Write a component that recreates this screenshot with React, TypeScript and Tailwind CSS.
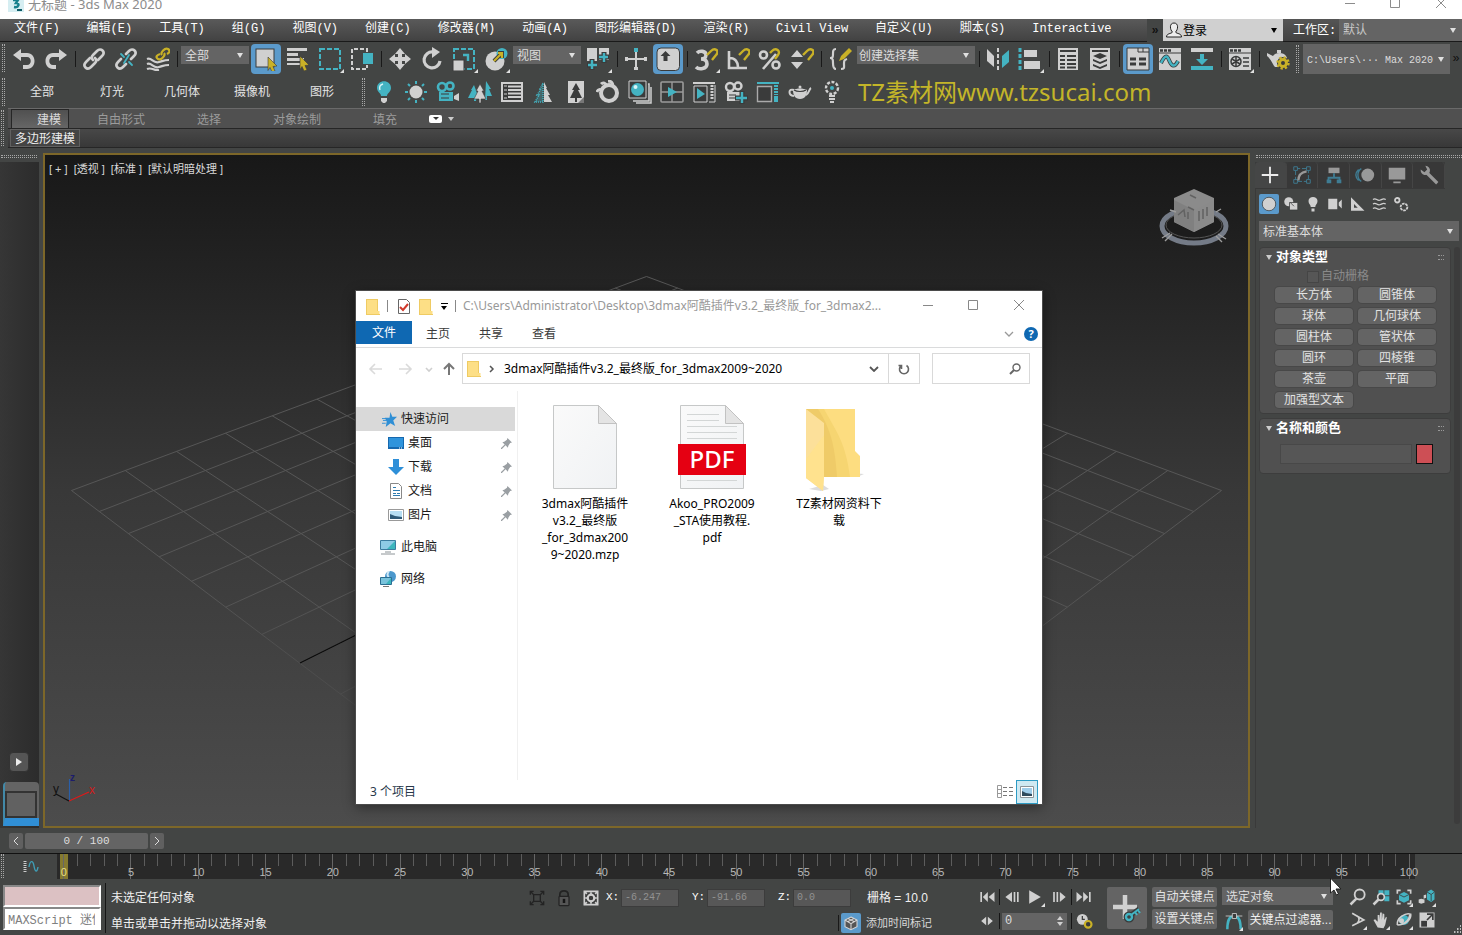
import React from 'react';

const G = '#d0d0d0';
const T = '#44b3c2';
const Y = '#c9b127';
const D = '#3a3b3b';

const MONO = "font-['Liberation_Mono','Noto_Sans_CJK_SC',monospace]";
const SANS = "font-['Noto_Sans','Noto_Sans_CJK_SC',sans-serif]";
const NUM = "font-['Liberation_Sans','Noto_Sans_CJK_SC',sans-serif]";

const magnet = <path d="M13 8l4-4c4-4 9 0 5 4l-4 5" fill="none" stroke={Y} strokeWidth="2.4" />;

// Drawings for the toolbars, all on a 24px canvas
const icons: Record<string, React.ReactNode> = {
  undo: <path d="M1 8l8-6v4h6c10 0 10 16 0 16h-4v-4h4c5 0 5-8 0-8H9v4z" fill={G} />,
  redo: <path d="M23 8l-8-6v4H9C-1 6-1 22 9 22h3v-4H9c-5 0-5-8 0-8h6v4z" fill={G} />,
  link: (
    <g fill="none" stroke={G} strokeWidth="2.6" strokeLinecap="round">
      <path d="M11 13c-2-2-1-4 0-5l4-4c4-4 9 1 5 5l-4 4" /><path d="M13 11c2 2 1 4 0 5l-4 4c-4 4-9-1-5-5l4-4" />
    </g>
  ),
  unlink: (
    <g fill="none" strokeWidth="2.6" strokeLinecap="round">
      <path d="M12 7l3-3c4-4 9 1 5 5l-3 3M12 17l-3 3c-4 4-9-1-5-5l3-3" stroke={G} />
      <path d="M7 7l3 3M18 18l-3-3" stroke={T} strokeWidth="1.8" /><path d="M15 8l-5 8" stroke={T} strokeWidth="1.8" />
    </g>
  ),
  bind: (
    <g fill="none" stroke={G} strokeWidth="2.2">
      <path d="M1 12c5-2 6 5 12 3 4-1 5-2 10-2M1 17c5-2 6 5 12 3 4-1 5-2 10-2M1 22c5-2 7 2 12 1" />
      <g stroke={Y}><path d="M16 8c-2-2 3-8 6-6s1 4-1 5" /><path d="M18 6c2 2-3 8-6 6s-1-4 2-5" /></g>
    </g>
  ),
  select: <><rect x="2" y="2" width="18" height="18" fill={G} stroke={D} /><path d="M14 10l9 9-4 .5 2 4.500-3 1-2-4.500-2 3z" fill={Y} stroke={D} strokeWidth=".6" /></>,
  byname: <><path d="M1 1h20v3H1zM1 6h11v3H1zM1 11h17v3H1zM1 16h13v2H1z" fill={G} /><path d="M14 9l9 9-4 .5 2 4.500-3 1-2-4.500-2 3z" fill={Y} stroke={D} strokeWidth=".6" /></>,
  region: <rect x="2" y="2" width="20" height="20" fill="none" stroke={T} strokeWidth="2" strokeDasharray="5 2" />,
  crossing: <><path d="M17 5V2H2v20h15v-4" fill="none" stroke={G} strokeWidth="2" strokeDasharray="4 2" /><rect x="13" y="6" width="10" height="11" fill={T} /></>,
  move: <path d="M12 1l5 6h-3v3h3V7l6 5-6 5v-3h-3v3h3l-5 6-5-6h3v-3H7v3l-6-5 6-5v3h3V7H7z" fill={G} />,
  rotate: <><path d="M20 14a8 8 0 1 1-7-9" fill="none" stroke={G} strokeWidth="3.2" /><path d="M12 0l8 5-8 6z" fill={G} /></>,
  scale: <><rect x="2" y="2" width="20" height="20" fill="none" stroke={T} strokeWidth="2" strokeDasharray="5 2" /><rect x="1" y="13" width="11" height="11" fill={G} stroke={D} /><path d="M11 8h5v6" fill="none" stroke={T} strokeWidth="2.4" /></>,
  place: <><circle cx="11" cy="14" r="9.5" fill={G} /><circle cx="18" cy="6.5" r="5.5" fill={T} /><path d="M10 14l8-8M14 6h4v5" fill="none" stroke={D} strokeWidth="4" /><path d="M10 14l8-8M14 6h4v5" fill="none" stroke={Y} strokeWidth="2.2" /></>,
  center: <><path d="M1 1h10v13H1zM13 1h10v12H13z" fill={G} /><path d="M6 12v11M1 18h10M18 5v11M13 10h10" stroke={D} strokeWidth="5" /><path d="M6 13v9M2 18h9M18 6v9M13 10h9" stroke={T} strokeWidth="2.4" /></>,
  manip: <><path d="M12 5v16M3 12h18" stroke={G} strokeWidth="2" /><path d="M1 10h3v4H1zM20 10h3v4h-3zM10 20h4v3h-4z" fill={G} /><rect x="10" y="1" width="4" height="4" fill={T} /></>,
  keyboard: <><rect x="1" y="1" width="22.500" height="22.500" rx="4" fill={G} stroke={D} /><path d="M9.500 4l5 5h-3v5h-4V9h-3z" fill={D} /></>,
  snap: <><path d="M3 6c3-3 9-2 9 2 0 3-3 4-5 4 3 0 6 1 6 5 0 5-8 6-11 3" fill="none" stroke={G} strokeWidth="3.6" />{magnet}</>,
  angle: <><path d="M3 4v17h18M4 11c5 0 8 4 8 9" fill="none" stroke={G} strokeWidth="2.6" />{magnet}</>,
  percent: <><g fill="none" stroke={G} strokeWidth="2.6"><circle cx="5.5" cy="8" r="3.5" /><circle cx="18" cy="18" r="3.5" /><path d="M18 7L5 22" /></g><path d="M12 6l2-2c4-4 9 0 6 4l-3 4" fill="none" stroke={Y} strokeWidth="2.4" /></>,
  spinner: <><path d="M7 3l6 7H1zM7 22l6-7H1z" fill={G} />{magnet}</>,
  braces: <><path d="M8 2C5 2 5 4 5 7c0 3 0 4-3 4 3 0 3 2 3 5 0 3 0 6 3 6M13 22c4 0 3-2 3-5 0-3 0-4 3-5" fill="none" stroke={G} strokeWidth="2.2" /><path d="M11 14l2-5 8-8 3 3-8 8z" fill={Y} /></>,
  mirror: <><path d="M1 2l7 7v11l-7-6z" fill={G} /><path d="M12 1v22" stroke={G} strokeWidth="2" strokeDasharray="4 2" /><path d="M23 3v12l-7 6V9z" fill={T} /></>,
  align: <><path d="M2 1v22" stroke={T} strokeWidth="3" strokeDasharray="4 2" /><path d="M6 3h13v7H6zM6 14h16v8H6z" fill={G} /></>,
  layers: <><rect x="2" y="1" width="20" height="22" fill={G} /><path d="M4 4h16M4 9h5M11 9h9M4 13h5M11 13h9M4 17h5M11 17h9M4 20.500h5M11 20.500h9" stroke={D} strokeWidth="2" /></>,
  layers2: <><rect x="2" y="1" width="20" height="22" fill={G} /><path d="M4 4h16" stroke={D} strokeWidth="2" /><path d="M12 6l7 3-7 3-7-3zM5 12l7 3 7-3v2l-7 3-7-3zM5 17l7 3 7-3v2l-7 3-7-3z" fill={D} /></>,
  ribbon: <><path d="M1 1h22v22H1z" fill={G} stroke={D} /><path d="M12 1v4h11M17 1v4" stroke={D} fill="none" /><path d="M4 12h6M4 17h6M13 12h7M13 17h7" stroke={D} strokeWidth="3" /></>,
  curve: <><path d="M1 1h22v22H1z" fill={G} /><path d="M2 3.500h12" stroke={D} strokeWidth="2.500" strokeDasharray="3 1" /><path d="M1 6h22" stroke={D} /><path d="M3 16c4-8 6-8 8-3s5 9 9 1" fill="none" stroke={D} strokeWidth="4" /><path d="M3 16c4-8 6-8 8-3s5 9 9 1" fill="none" stroke={T} strokeWidth="2.4" /></>,
  schematic: <><path d="M1 1h22v4H1z" fill={G} /><path d="M1 19h22v4H1z" fill={T} /><path d="M10 7h4v5h4l-6 6-6-6h4z" fill={T} /></>,
  material: <><path d="M1 1h22v22H1z" fill={G} /><path d="M2 3.500h12" stroke={D} strokeWidth="2.500" strokeDasharray="3 1" /><path d="M1 6h22" stroke={D} /><circle cx="8" cy="14.5" r="5" fill="none" stroke={D} strokeWidth="1.5" /><path d="M8 10v9M4 12l8 5M4 17l8-5M15 11h6M15 15h6M15 19h6" stroke={D} strokeWidth="1.5" /></>,
  render: <><path d="M1 6l6 3c2-4 11-4 13 0 3 4 0 10-4 11H9C7 18 5 12 1 9zM11 3h4v3h-4z" fill={G} /><circle cx="17" cy="16" r="6" fill={D} /><circle cx="17" cy="16" r="3.5" fill="none" stroke={Y} strokeWidth="3" /><circle cx="17" cy="16" r="5.5" fill="none" stroke={Y} strokeWidth="2.400" strokeDasharray="2.300 2" /></>,
  bulb: <><path d="M9 16c0-3-4-4-4-8 0-9 14-9 14 0 0 4-4 5-4 8z" fill={T} /><path d="M9 18h6v3l-2 2h-2l-2-2z" fill={G} /><path d="M11 4c-3 1-4 3-3 6" stroke="#d8f5f7" fill="none" strokeWidth="1.4" /></>,
  sun: <><circle cx="12" cy="12" r="6.5" fill={G} /><path d="M12 1v3M12 20v3M1 12h3M20 12h3M4 4l2 2M18 18l2 2M20 4l-2 2M4 20l2-2" stroke={T} strokeWidth="2" /></>,
  camera: <><circle cx="6" cy="7" r="4" fill="none" stroke={T} strokeWidth="2.6" /><circle cx="14" cy="6" r="3.5" fill="none" stroke={T} strokeWidth="2.6" /><path d="M3 12h14v9H3z" fill={T} /><path d="M5 14h8M5 18h8" stroke={D} /><path d="M18 16l5-3v8l-5-2z" fill={G} /></>,
  trees: <><path d="M18 1l5 8h-2l3 7h-5v4h-2z" fill={T} /><path d="M6 5L3 10h1L0 18h6v3h2l1-8z" fill={T} /><path d="M12 4l4 7h-2l4 8h-5v4h-2v-4H6l4-8H8z" fill={G} stroke={D} strokeWidth=".6" /></>,
  sheet: <><rect x="2" y="3" width="20" height="18" fill={D} stroke={G} strokeWidth="2" /><path d="M4 6h3M4 10h3M4 14h3M4 18h3" stroke={G} /><path d="M8 6.500h13M8 10h13M8 13.500h13M8 17h13" stroke={G} strokeWidth="2" /></>,
  forest: <><path d="M11 3L8 9h1l-4 6h2l-4 7h8z" fill={T} fillOpacity=".3" stroke={T} strokeWidth="1.500" strokeDasharray="1 1" /><path d="M12 2l3 6h-1l4 7h-2l4 7h-8z" fill={G} /></>,
  treecard: <><path d="M4 1h16v22H4z" fill={G} /><path d="M20 17v6h-6z" fill="#777" /><path d="M12 3l4 7h-2l4 8h-5v4h-2v-4H6l4-8H8z" fill={D} /></>,
  ring: <><circle cx="13" cy="13" r="8" fill="none" stroke={G} strokeWidth="4" /><path d="M1 12c1-3 3-3 5-1M5 4c2-2 5-1 6 2M12 1c3 0 5 2 5 5" stroke={G} strokeWidth="3" fill="none" /></>,
  ball: <><path d="M1 1h17v17H1z" fill={D} stroke={G} /><path d="M20 4h1v17H5M23 7v16H8" stroke={G} fill="none" strokeWidth="1.5" /><circle cx="9.5" cy="9.5" r="6.5" fill={T} /><circle cx="7.5" cy="7" r="2" fill="#d8f5f7" /></>,
  quad: <><rect x="1" y="2" width="22" height="20" rx="1" fill={D} stroke="#9b9b9b" strokeWidth="1.600" /><path d="M12 2v20M1 12h22" stroke="#9b9b9b" strokeWidth="1.4" /><path d="M8 7l9 5-9 5z" fill={T} /></>,
  play: <><path d="M1 3h22" stroke={G} strokeWidth="2" /><path d="M2 6h13v16H2z" fill={D} stroke={G} /><path d="M5 8l8 6-8 5z" fill={T} /><path d="M20 5v15" stroke={G} strokeWidth="3" strokeDasharray="2 1" /><path d="M17 22h6V5" fill="none" stroke={G} /></>,
  camadd: <><circle cx="6" cy="7" r="4" fill="none" stroke={G} strokeWidth="2.4" /><circle cx="14" cy="6" r="3.5" fill="none" stroke={G} strokeWidth="2.4" /><path d="M3 12h15v9H3z" fill={G} /><path d="M5 15h7M5 18h7" stroke={D} /><path d="M18 11v13M11 18h13" stroke={D} strokeWidth="5" /><path d="M18 12v11M12 18h11" stroke={T} strokeWidth="2.4" /></>,
  frame: <><path d="M1 3h22" stroke={T} strokeWidth="2" /><path d="M1.500 6.500h14v15h-14z" fill={D} stroke="#aaa" strokeWidth="1.4" /><path d="M20 5v10" stroke={T} strokeWidth="4" strokeDasharray="2 1" /><path d="M20 16v6" stroke={T} strokeWidth="4" /></>,
  teapot: <><path d="M5 10c0 5 2 9 7 9s7-4 7-9c-4-2-10-2-14 0z" fill={G} /><path d="M6 10C0 8 0 15 6 16M18 15c3-1 3-6 5-7" fill="none" stroke={G} strokeWidth="2" /><path d="M6 10c3 2 9 2 12 0" fill="none" stroke={D} strokeWidth="1.200" /><circle cx="12" cy="7" r="1.500" fill={G} /></>,
  spot: <><circle cx="12" cy="8" r="6" fill="none" stroke={G} strokeWidth="2.4" strokeDasharray="3 1.500" /><circle cx="12" cy="8" r="2" fill={T} /><path d="M9 15h6v2H9zM9 18h6v2H9zM10 21h4v2h-4z" fill={G} /></>,
  isolate: <g fill="none" stroke="#232323" strokeWidth="1.6"><path d="M4 8V4h4M16 4h4v4M20 16v4h-4M8 20H4v-4M8 8h8v8H8zM4 4l4 4M20 4l-4 4M4 20l4-4M20 20l-4-4" /></g>,
  lock: <><path d="M7 11V8c0-6 10-6 10 0v3" fill="none" stroke="#232323" strokeWidth="2" /><rect x="6" y="10" width="12" height="11" rx="1" fill="#555" stroke="#232323" strokeWidth="1.5" /><path d="M12 13v5" stroke="#161616" strokeWidth="3" /></>,
  absolute: <><path d="M4 4h16v16H4z" fill={D} stroke={G} strokeWidth="2" /><path d="M4 4l3 3M20 4l-3 3M4 20l3-3M20 20l-3-3" stroke={G} strokeWidth="2" /><circle cx="12" cy="12" r="4" fill={D} stroke={G} strokeWidth="2.600" /><path d="M12 5v4M12 15v4M5 12h4M15 12h4" stroke={G} strokeWidth="2" /></>,
  tag: <g fill="#555" stroke="#d6d6d6" strokeWidth="1.4"><path d="M12 4l8 4v9l-8 4-8-4V8z" /><path d="M4 8l8 5 8-5M12 13v8M8 6l8 4M16 6l-8 4" fill="none" /></g>,
  first: <path d="M4 6h2v12H4zM13 6v12l-6-6zM21 6v12l-7-6z" fill={G} />,
  prev: <path d="M12 6v12l-8-6zM14 6h2v12h-2zM18 6h2v12h-2z" fill={G} />,
  start: <path d="M5 4l14 8-14 8z" fill={G} />,
  next: <path d="M5 6h2v12H5zM9 6h2v12H9zM13 6l7 6-7 6z" fill={G} />,
  last: <path d="M18 6h2v12h-2zM3 6l7 6-7 6zM11 6l6 6-6 6z" fill={G} />,
  step: <path d="M11 7v10l-6-5zM13 7l6 5-6 5z" fill={G} />,
  clock: <><circle cx="10" cy="10" r="6.5" fill={G} /><path d="M10 6v4h3" stroke={D} strokeWidth="1.5" fill="none" /><circle cx="17" cy="16" r="4" fill={D} stroke={Y} strokeWidth="2.6" /></>,
  zoom: <><circle cx="14" cy="9" r="6" fill="none" stroke={G} strokeWidth="2.2" /><path d="M10 14l-7 7" stroke={G} strokeWidth="3" /></>,
  zoomall: <><path d="M9 4h6v6H9zM16 4h6v6h-6zM16 11h6v6h-6z" fill={T} /><circle cx="12" cy="12" r="4" fill={D} stroke={G} strokeWidth="2" /><path d="M9 15l-6 6" stroke={G} strokeWidth="3" /></>,
  extents: <><path d="M4 8V4h4M16 4h4v4M20 16v4h-4M8 20H4v-4" fill="none" stroke={G} strokeWidth="2" /><path d="M12 6l6 3v7l-6 3-6-3V9z" fill={T} /><path d="M6 9l6 3 6-3" fill="none" stroke={D} /></>,
  extall: <><path d="M12 6l5-3 4 3v9l-4 3-5-3z" fill={T} /><path d="M12 6l5 3 4-3M17 9v8" stroke={D} fill="none" /><path d="M2 15l3-1 4 1v4l-4 1-3-1zM8 10l3-1v4l-3 1z" fill={G} /></>,
  fov: <path d="M5 4l14 8-14 7M11 7c3 2 3 6 0 9" fill="none" stroke={G} strokeWidth="2" />,
  pan: <path d="M8 21l-5-9 2-1 3 3V6h2v6l1-9h2v9l1-8 2 1v7l2-4 1 1-2 9-2 4z" fill={G} />,
  orbit: <><circle cx="12" cy="12" r="6" fill={T} /><path d="M4 18C3 9 14 3 20 5c1 6-6 13-16 13M9 17c5-1 9-5 10-11" fill="none" stroke={G} strokeWidth="2" /><circle cx="9" cy="13" r="3" fill={G} /></>,
  maximize: <><path d="M3 3h18v18H3z" fill={G} /><path d="M12 5h7v7M18 6l-6 6" stroke={D} strokeWidth="2" fill="none" /><path d="M5 13h7v7H5z" fill={D} /></>,
  keycurve: <><path d="M4 22c0-8 2-15 6-15M20 22c0-8-2-15-6-15" fill="none" stroke={T} strokeWidth="3" /><path d="M2 6h20" stroke={G} /><path d="M10 3h5v6h-5z" fill={D} stroke={G} /></>,
};

const Icon = ({ name, className = 'size-6' }: { name: string; className?: string }) => (
  <svg viewBox="0 0 24 24" className={`${className} shrink-0`} aria-hidden="true">{icons[name]}</svg>
);

const Corner = () => <span className="absolute right-0.5 bottom-px size-0 border-2 border-t-transparent border-l-transparent border-r-[#e0e0e0] border-b-[#e0e0e0]" />;

const ToolButton = ({ name, active = false, corner = false }: { name: string; active?: boolean; corner?: boolean }) => (
  <button aria-label={name} className="relative flex w-8 h-[30px] shrink-0 items-center justify-center">
    <span className={`flex size-[30px] items-center justify-center rounded ${active ? 'bg-[#5b9acb]' : ''}`}>
      <Icon name={name} />
    </span>
    {corner && <Corner />}
  </button>
);

const Sep = () => <span className="w-[6px] shrink-0 flex justify-center"><span className="w-px h-4 bg-[#191919]" /></span>;

const Grip = ({ className = '' }: { className?: string }) => (
  <span className={`w-[3px] shrink-0 border-x border-dotted border-[#a8a8a8] ${className}`} />
);

interface SelectProps { label: string; options: string[]; className?: string; text?: string; arrow?: string }

const Select = ({ label, options, className = '', text = 'pl-1 text-[#dcdcdc]', arrow = 'border-t-[#e0e0e0]' }: SelectProps) => (
  <span className={`relative flex items-center ${className}`}>
    <select aria-label={label} className={`appearance-none outline-none bg-transparent w-full h-full pt-[3px] pr-4 ${text}`}>
      {options.map(o => <option key={o}>{o}</option>)}
    </select>
    <span className={`absolute right-[6px] border-x-[3px] border-t-[5px] border-x-transparent pointer-events-none ${arrow}`} />
  </span>
);

const MENUS = ['文件(F)', '编辑(E)', '工具(T)', '组(G)', '视图(V)', '创建(C)', '修改器(M)', '动画(A)', '图形编辑器(D)', '渲染(R)', 'Civil View', '自定义(U)', '脚本(S)', 'Interactive'];

const TitleBar = () => (
  <header className={`flex h-[19px] shrink-0 items-start justify-between overflow-hidden bg-white text-[#8c8c8c] ${SANS}`}>
    <div className="flex items-center gap-1 pl-2 -mt-1.5">
      <svg viewBox="0 0 16 16" className="size-4">
        <rect width="16" height="16" fill="#d6eef2" />
        <path d="M5 4h5l-2 3c4 0 3 5-2 4" fill="none" stroke="#15808c" strokeWidth="2.4" />
        <path d="M9 14h5" stroke="#0d5a66" strokeWidth="2" />
      </svg>
      <span className="text-[13px] leading-5">无标题 - 3ds Max 2020</span>
    </div>
    <svg viewBox="0 0 120 19" className="w-[120px] h-[19px] fill-none stroke-[#8c8c8c]">
      <path d="M3 3.500h10M48.500-2v9.500h9V-2M94-2l10 10M104-2L94 8" />
    </svg>
  </header>
);

const MenuBar = () => (
  <div className={`flex h-[23px] shrink-0 text-xs text-white ${MONO}`}>
    <nav className="flex flex-1 min-w-0 items-center gap-[27px] overflow-hidden whitespace-nowrap border-b border-[#1a1a1a] bg-linear-to-b from-[#5a5a5a] to-[#424242] pl-3.5 pb-0.5">
      {MENUS.map(m => <button key={m} className="shrink-0">{m}</button>)}
    </nav>
    <button className="w-4 text-[#111] font-bold">»</button>
    <div className="flex w-30 h-[22px] items-center bg-[#d0d0d0] pl-0.5">
      <svg viewBox="0 0 18 18" className="size-[18px] shrink-0">
        <path d="M9 2c5 0 4 7 1.500 9 1 2 6 1 6 5h-15c0-4 5-3 6-5C5 9 4 2 9 2z" fill="#eee" stroke="#222" />
      </svg>
      <Select label="登录" options={['登录']} className="flex-1 h-full" text="text-black" arrow="border-t-black" />
    </div>
    <label htmlFor="workspace" className="flex w-14 items-center border-b border-[#1a1a1a] bg-linear-to-b from-[#555] to-[#424242] pt-0.5 pl-2.5 whitespace-nowrap">工作区:</label>
    <span className="relative flex w-[123px] items-center border-b border-[#1a1a1a] bg-[#646464]">
      <select id="workspace" className="appearance-none bg-transparent w-full h-full pt-0.5 pl-1 text-[#c8c8c8]"><option>默认</option></select>
      <span className="absolute right-[6px] border-x-[3px] border-t-[5px] border-x-transparent border-t-[#e0e0e0] pointer-events-none" />
    </span>
  </div>
);

const MainToolbar = () => (
  <div className={`flex h-[34px] shrink-0 items-start pt-[2px] pl-[2px] text-xs ${MONO}`}>
    <Grip className="h-7 mr-[3px]" />
    <div className="flex flex-1 min-w-0 h-[30px] items-center">
      <ToolButton name="undo" /><ToolButton name="redo" /><Sep />
      <ToolButton name="link" /><ToolButton name="unlink" /><ToolButton name="bind" /><Sep />
      <Select label="选择过滤器" options={['全部']} className="w-[68px] h-[18px] mx-px mb-2 shrink-0 bg-[#646464]" />
      <ToolButton name="select" active /><ToolButton name="byname" /><ToolButton name="region" corner /><ToolButton name="crossing" /><Sep />
      <ToolButton name="move" /><ToolButton name="rotate" /><ToolButton name="scale" corner /><ToolButton name="place" corner />
      <Select label="参考坐标系" options={['视图']} className="w-[68px] h-[18px] mx-px mb-2 shrink-0 bg-[#646464]" />
      <ToolButton name="center" corner /><Sep />
      <ToolButton name="manip" /><ToolButton name="keyboard" active /><Sep />
      <ToolButton name="snap" corner /><ToolButton name="angle" /><ToolButton name="percent" /><ToolButton name="spinner" /><Sep />
      <ToolButton name="braces" />
      <Select label="命名选择集" options={['创建选择集']} className="w-[118px] h-[18px] mx-px mb-2 shrink-0 bg-[#646464]" text="pl-0.5 text-[#dcdcdc]" />
      <Sep />
      <ToolButton name="mirror" /><ToolButton name="align" corner /><Sep />
      <ToolButton name="layers" /><ToolButton name="layers2" /><Sep />
      <ToolButton name="ribbon" active /><ToolButton name="curve" /><ToolButton name="schematic" /><Sep />
      <ToolButton name="material" corner /><Sep />
      <ToolButton name="render" />
      <Grip className="h-7 ml-[2px] mr-1" />
      <Select label="项目路径" options={['C:\\Users\\··· Max 2020']} className="flex-1 min-w-0 h-[30px] bg-[#646464] text-[10px]" />
      <button className="w-3 text-[#111]">»</button>
    </div>
  </div>
);

const CATEGORIES = ['全部', '灯光', '几何体', '摄像机', '图形'];
const PLUGIN_ICONS = ['bulb', 'sun', 'camera', 'trees', 'sheet', 'forest', 'treecard', 'ring', 'ball', 'quad', 'play', 'camadd', 'frame', 'teapot', 'spot'];

const PluginToolbar = () => (
  <div className="flex h-[31px] shrink-0 items-center pl-[2px]">
    <Grip className="h-7" />
    <div className={`flex pl-0.5 text-xs text-[#e4e4e4] ${MONO}`}>
      {CATEGORIES.map(c => <button key={c} className="w-[70px] h-7 pt-[3px]">{c}</button>)}
    </div>
    <Grip className="h-7 ml-[5px] mr-[3px]" />
    {PLUGIN_ICONS.map(n => <ToolButton key={n} name={n} />)}
    <span className={`pl-2.5 text-2xl leading-7 text-[#c3b529] whitespace-nowrap ${SANS}`}>TZ素材网www.tzsucai.com</span>
  </div>
);

const Ribbon = () => (
  <div className="flex h-[41px] shrink-0 pl-px pt-px text-xs font-['Noto_Sans_CJK_SC',sans-serif]">
    <Grip className="h-9 mt-0.5" />
    <div className="flex-1 ml-1 border-t border-[#6a6a6a]">
      <div className="flex h-5 items-end border-b border-[#262626] bg-[#505050] pl-[3px] text-[#9b9b9b]">
        <button className="w-[58px] h-[19px] pr-[7px] text-right text-[#d9d9d9] border-t border-x border-[#262626] bg-linear-to-b from-[#505050] to-[#666] leading-[18px]">建模</button>
        <div className="flex h-full items-center gap-[52px] pl-7">
          <button>自由形式</button><button>选择</button><button>对象绘制</button><button>填充</button>
        </div>
        <div className="flex h-full items-center gap-1.5 pl-8">
          <button aria-label="最小化功能区" className="flex w-[13px] h-2 items-center justify-center rounded-[2px] bg-white">
            <span className="border-x-[3px] border-t-[3px] border-x-transparent border-t-[#333]" />
          </button>
          <span className="border-x-[3px] border-t-[4px] border-x-transparent border-t-[#ccc]" />
        </div>
      </div>
      <div className="flex h-[19px] border-b border-[#262626] bg-linear-to-b from-[#484848] to-[#383838] pl-0.5">
        <button className="w-[70px] border border-[#606060] bg-[#444] text-[#ececec] leading-4">多边形建模</button>
      </div>
    </div>
  </div>
);

// Home grid as seen by the perspective camera: 14x14 cells, rotated by 45 degrees
const CELLS = 14;
const project = (a: number, b: number) => {
  const x = (a + b) / CELLS - 1;
  const z = (a - b) / CELLS;
  const w = 1 + 0.3405 * z;
  return [646.5 + (575 * x) / w - 45, 842.5 / w - 352 - 155];
};

const gridLines: number[][] = [];
for (let i = 0; i <= CELLS; i++) {
  gridLines.push([...project(i, 0), ...project(i, CELLS)]);
  gridLines.push([...project(0, i), ...project(CELLS, i)]);
}

const Viewport = () => (
  <main className="relative flex-1 min-w-0 mt-[5px] overflow-hidden border-2 border-[#7d6729] bg-linear-to-b from-[#181818] via-[#383838] to-[#4c4c4c]">
    <svg viewBox="0 0 1203 672" preserveAspectRatio="xMidYMin slice" className="absolute inset-0 size-full">
      <defs>
        <linearGradient id="fade" gradientUnits="userSpaceOnUse" x1="0" y1="430" x2="0" y2="620">
          <stop offset="0" stopColor="#565656" />
          <stop offset="1" stopColor="#565656" stopOpacity="0" />
        </linearGradient>
      </defs>
      {gridLines.map(([x1, y1, x2, y2], i) => <path key={i} d={`M${x1} ${y1}L${x2} ${y2}`} stroke="url(#fade)" fill="none" />)}
      <path d="M255 508L847 213" stroke="#0a0a0a" strokeWidth="1.200" />
      <g strokeWidth="1.2" fontSize="12" fontFamily="Liberation Sans, sans-serif">
        <path d="M24.500 646v-22" stroke="#2a5fa8" /><path d="M24 646l20-9" stroke="#e01818" /><path d="M24 646l-13-7" stroke="#111" />
        <text x="25" y="626" fontSize="10" fontWeight="bold" fill="#1c1c6c">z</text>
        <text x="44" y="639" fill="#d01c1c">x</text>
        <text x="8" y="638" fill="#111">y</text>
      </g>
    </svg>
    <div className="relative flex gap-1.5 pt-[6px] pl-1 text-[11px] leading-4 text-[#d8d8d8] font-['Liberation_Sans','Noto_Sans_CJK_SC',sans-serif]">
      <button>[ + ]</button><button>[透视 ]</button><button>[标准 ]</button><button>[默认明暗处理 ]</button>
    </div>
    <svg viewBox="0 0 72 60" className="absolute right-[18px] top-[33px] w-[72px] h-[60px]">
      <ellipse cx="36" cy="38" rx="32" ry="17" fill="#1c1c1c" stroke="#747b87" strokeWidth="5" />
      <ellipse cx="36" cy="37" rx="28" ry="13" fill="none" stroke="#555" />
      <path d="M36 1l20 9v24L36 44 16 34V10z" fill="#8b8b8b" />
      <path d="M16 12l20 10v22L16 34z" fill="#808080" /><path d="M56 12L36 22v22l20-10z" fill="#8a8a8a" />
      <path d="M20 27l6-5 1 7M30 24v7M41 23v10M45 21v10M49 19v9M32 7l6 3M30 19l6 3" fill="none" stroke="#626262" strokeWidth="1.5" />
      <path d="M4 50l8-5M7 53l7-7M60 46l8 5M58 48l6 6M12 22l6 2M58 24l5-3" stroke="#9d9d9d" strokeWidth="1.4" />
    </svg>
  </main>
);

const LeftStrip = () => (
  <aside className="flex w-[43px] shrink-0 flex-col pt-[7px]">
    <span className="h-[3px] w-9 ml-px border-y border-dotted border-[#a8a8a8]" />
    <div className="mt-1 flex w-[39px] flex-1 flex-col bg-linear-to-r from-[#363636] to-[#2c2c2c]">
      <button aria-label="展开" className="mt-auto ml-[9px] flex size-5 items-center justify-center rounded border border-[#333] bg-[#555]">
        <span className="border-y-[4px] border-l-[6px] border-y-transparent border-l-[#ececec]" />
      </button>
      <button aria-label="视口布局" className="mt-2.5 ml-[3px] mb-[2px] h-11 rounded-t border-l-2 border-b-8 border-l-[#4289a8] border-b-[#308fd6] bg-[#646464] pt-2">
        <span className="block h-[27px] w-8 border-2 border-[#333] bg-[#616161]" />
      </button>
    </div>
  </aside>
);

const PANEL_TABS = [
  <path key="c" d="M12 3v18M3 12h18" stroke="#ececec" strokeWidth="2" />,
  <g key="m" fill="none" stroke="#3f7c93"><path d="M5 5h14v14H5z" strokeDasharray="5 2" /><path d="M3 3h4v4H3zM17 3h4v4h-4zM3 17h4v4H3zM17 17h4v4h-4z" fill="#383838" /><path d="M8 18c0-6 3-9 9-10" stroke="#999" strokeWidth="2.5" /></g>,
  <g key="h"><path d="M6 4h12v6H6z" fill="#999" /><path d="M12 10v5M6 18v-3h12v3" fill="none" stroke="#3f7c93" strokeWidth="2" /><path d="M4 17h5v4H4zM15 17h5v4h-5z" fill="#3f7c93" /></g>,
  <g key="o"><path d="M8 5c-5 3-5 11 0 14M5 6c-4 4-4 8 0 12" fill="none" stroke="#3f7c93" strokeWidth="1.5" /><circle cx="15" cy="12" r="7" fill="#999" /></g>,
  <g key="d"><path d="M3 4h18v13H3zM8 19h8v2H8z" fill="#999" /></g>,
  <g key="u"><path d="M9 9l12 12" stroke="#999" strokeWidth="3.500" /><path d="M3 6a5 5 0 0 0 10 2 5 5 0 0 0-5-6l2 4-3 3z" fill="#999" /></g>,
];

const CREATE_KINDS = [
  <circle key="g" cx="12" cy="12" r="9" fill={G} stroke={D} />,
  <g key="s"><circle cx="9" cy="9" r="6" fill={G} /><path d="M10 10h11v10H10z" fill={G} stroke={D} /><path d="M11 10l5 5" stroke={D} /></g>,
  <g key="l"><path d="M9 16c0-3-3-4-3-8 0-7 12-7 12 0 0 4-3 5-3 8zM10 18h4v4h-4z" fill={G} /></g>,
  <path key="c" d="M3 5h12v14H3zM17 10l4-4v12l-4-4z" fill={G} />,
  <g key="h"><path d="M4 3v18h18zM8 12l5 5H8z" fill={G} fillRule="evenodd" /></g>,
  <path key="w" d="M4 6c4-3 5 2 9 1s4-3 8-1M4 12c4-3 5 2 9 1s4-3 8-1M4 18c4-3 5 2 9 1s4-3 8-1" fill="none" stroke={G} strokeWidth="1.7" />,
  <g key="y" fill="none" stroke={G} strokeWidth="2.4"><circle cx="7" cy="7" r="3" /><circle cx="16" cy="16" r="4.500" strokeDasharray="3.500 1" /></g>,
];

const PRIMITIVES = ['长方体', '圆锥体', '球体', '几何球体', '圆柱体', '管状体', '圆环', '四棱锥', '茶壶', '平面', '加强型文本'];

const RolloutHeader = ({ title }: { title: string }) => (
  <button className="flex h-[18px] w-full items-center px-1.5 text-[13px] font-bold text-white">
    <span className="border-x-[3px] border-t-[5px] border-x-transparent border-t-[#ccc]" />
    <span className="pl-1 pt-0.5">{title}</span>
    <span className="ml-auto h-[5px] w-[6px] border-y border-dotted border-[#999]" />
  </button>
);

const CommandPanel = () => (
  <aside className={`flex w-[212px] shrink-0 flex-col pt-[7px] pl-[5px] text-xs text-[#e2e2e2] ${MONO}`}>
    <span className="ml-px h-[3px] border-y border-dotted border-[#a8a8a8]" />
    <div className="mt-1 flex border-b border-[#393939] bg-[#3a3b3b] mr-[17px]">
      {PANEL_TABS.map((art, i) => (
        <button key={i} aria-label={`面板 ${i + 1}`} className={`flex w-8 h-[26px] items-center justify-center rounded-t border-r border-[#454545] ${i === 0 ? 'bg-[#454646]' : 'bg-[#383838]'}`}>
          <svg viewBox="0 0 24 24" className="size-[22px]">{art}</svg>
        </button>
      ))}
    </div>
    <div className="flex flex-1 flex-col border-l border-[#3a3a3a] pl-[3px] pt-[5px]">
      <div className="flex gap-[2px]">
        {CREATE_KINDS.map((art, i) => (
          <button key={i} aria-label={`类别 ${i + 1}`} className={`flex size-5 items-center justify-center rounded-[2px] ${i === 0 ? 'bg-[#5b9acb]' : ''}`}>
            <svg viewBox="0 0 24 24" className="size-[18px]">{art}</svg>
          </button>
        ))}
      </div>
      <Select label="子类别" options={['标准基本体']} className="mt-[7px] mr-[3px] h-5 bg-[#646464]" />
      <div className="flex flex-1 pt-[6px]">
        <div className="flex w-48 flex-col gap-1">
          <section className="h-[167px] rounded-sm border border-[#3d3d3d] bg-[#505050]">
            <RolloutHeader title="对象类型" />
            <label className="flex h-5 items-center gap-0.5 pl-[47px] pt-0.5 text-[#8a8a8a]">
              <input type="checkbox" className="size-3 appearance-none border border-[#454545] bg-[#565656]" />自动栅格
            </label>
            <div className="grid grid-cols-2 gap-[5px] pl-[15px] pr-3.5 pt-px">
              {PRIMITIVES.map(p => <button key={p} className="h-4 rounded-sm bg-[#646464] leading-[18px] shadow-[0_0_0_1px_#484848]">{p}</button>)}
            </div>
          </section>
          <section className="h-14 rounded-sm border border-[#3d3d3d] bg-[#505050]">
            <RolloutHeader title="名称和颜色" />
            <div className="flex gap-1 pl-5 pt-[7px]">
              <input aria-label="名称" className="h-5 w-[132px] border border-[#484848] bg-[#565656] outline-none" />
              <button aria-label="颜色" className="h-5 w-[17px] border border-[#111] bg-[#cd4f55]" />
            </div>
          </section>
        </div>
        <span className="ml-[3px] mb-1 w-[6px] rounded-full bg-[#3c3c3c]" />
      </div>
    </div>
  </aside>
);

const Folder = ({ className = 'w-3.5 h-[17px]' }: { className?: string }) => (
  <svg viewBox="0 0 14 17" className={className}><path d="M0 1h12v12h1.500v3.500H0z" fill="#fddf86" /><path d="M0 1h12v12h-1V2H1v14h13v1H0z" fill="#efcb63" /></svg>
);

const PLACES: [string, React.ReactNode][] = [
  ['桌面', <><path d="M0 2h16v12H0z" fill="#1668ae" /><path d="M1 3h14v9H1z" fill="#2f94dc" /><path d="M11 13h1M13 13h1" stroke="#fff" /></>],
  ['下载', <path d="M5 0h6v8h5l-8 8-8-8h5z" fill="#2e8fd8" />],
  ['文档', <><path d="M2.500.500h8l3 3v12h-11z" fill="#fff" stroke="#888" /><path d="M5 4.500h3M5 7.500h7M5 10.500h3M9 10.500h3M5 12.500h7" stroke="#2f7cb0" /></>],
  ['图片', <><path d="M.500 2.500h15v11H.500z" fill="#fff" stroke="#999" /><path d="M2 4h12v8H2z" fill="#b7def3" /><path d="M2 7l5 2 7 1v2H2z" fill="#2f5a78" /></>],
];

const Sidebar = () => (
  <nav className="w-[162px] shrink-0 border-r border-[#f0f0f0] pt-4 pr-0.5">
    <a href="#quick" className="flex h-6 items-center gap-1 bg-[#d9d9d9] pl-[26px]">
      <svg viewBox="0 0 16 16" className="size-[15px]"><path d="M9 0l2 5h5l-4 4 2 6-5-3-5 4 1-6-2-4h5z" fill="#2f8fd5" /><path d="M0 7h5M1 9h4M0 12h4" stroke="#2f8fd5" /></svg>
      快速访问
    </a>
    {PLACES.map(([name, art]) => (
      <a key={name} href={`#${name}`} className="flex h-6 items-center pl-8 pr-[3px]">
        <svg viewBox="0 0 16 16" className="size-4 mr-1">{art}</svg>
        {name}
        <svg viewBox="0 0 12 12" className="ml-auto size-[11px]"><path d="M7 0l5 5-2 .5-2 3-.5 2L5 8l-4 4H0v-1l4-4-2.500-2.500 2-.5 3-2z" fill="#9a9fa3" /></svg>
      </a>
    ))}
    <a href="#pc" className="mt-2 flex h-6 items-center gap-[5px] pl-6">
      <svg viewBox="0 0 16 16" className="size-4"><path d="M.500 1.500h15v9H.500z" fill="#8ecbe6" stroke="#3b7ca0" /><path d="M7 10l8-8v8z" fill="#3cb6bd" /><path d="M5 13h6M1 15h14" stroke="#8d9498" /></svg>
      此电脑
    </a>
    <a href="#net" className="mt-2 flex h-6 items-center gap-[5px] pl-6">
      <svg viewBox="0 0 16 16" className="size-4"><circle cx="10.5" cy="5.5" r="5.5" fill="#4b98cd" /><path d="M9 0c-2 3-2 5 0 6" stroke="#cfe9f7" strokeWidth="2" fill="none" /><path d="M.500 6.500h11v7H.500z" fill="#79c3dc" stroke="#2c6f92" /><path d="M6 13l5-6v6z" fill="#3cb6bd" /><path d="M3 15.500h6" stroke="#777" /></svg>
      网络
    </a>
  </nav>
);

const SheetArt = ({ pdf = false }: { pdf?: boolean }) => (
  <svg viewBox="0 0 70 86" className="w-[70px] h-[86px]">
    <defs>
      <linearGradient id="paper" x1="0" y1="0" x2="1" y2="1"><stop offset="0" stopColor="#fafafa" /><stop offset="1" stopColor="#f0f2f4" /></linearGradient>
    </defs>
    <path d="M3.500.500h45l18 18v65h-63z" fill="url(#paper)" stroke="#c6c8c8" />
    <path d="M48.500.500v18h18z" fill="#e4e4e4" stroke="#c2c2c2" />
    {pdf && (
      <>
        <path d="M10 9.500h32M10 15.500h32M10 21.500h50M10 27.500h50M10 33.500h50M10 75.500h50" stroke="#d3d6d6" />
        <path d="M1 39h68v31H1z" fill="#e50012" />
        <text x="35" y="63" textAnchor="middle" fontSize="24" fontWeight="500" fill="#fff" fontFamily="Noto Sans, sans-serif">PDF</text>
      </>
    )}
  </svg>
);

const FolderArt = () => (
  <svg viewBox="0 0 76 86" className="w-[76px] h-[86px]">
    <path d="M8 84l14-4 6 4-8 2zM50 68l13 1-7 3h-8z" fill="#dcdcdc" />
    <path d="M5 4h49v42l5 5v21H22z" fill="#fddd80" />
    <path d="M5 4h18c12 22 22 34 26 68H22z" fill="#f6d571" />
    <path d="M5 4h12c14 22 17 40 19 68H22z" fill="#efcb68" />
    <path d="M5 4l18 14v52l-1 16L5 73z" fill="#fce09a" />
    <path d="M5 54l18-24v40l-1 16L5 73z" fill="#ffe28e" />
  </svg>
);

const FILES = [
  { lines: ['3dmax阿酷插件', 'v3.2_最终版', '_for_3dmax200', '9~2020.mzp'], art: <SheetArt /> },
  { lines: ['Akoo_PRO2009', '_STA使用教程.', 'pdf'], art: <SheetArt pdf /> },
  { lines: ['TZ素材网资料下', '载'], art: <FolderArt /> },
];

const Explorer = () => (
  <div className={`absolute left-[356px] top-[291px] flex h-[513px] w-[686px] flex-col bg-white text-xs text-[#1a1a1a] shadow-[0_0_0_1px_#4b4b4b,0_3px_12px_rgba(0,0,0,0.45)] ${SANS}`}>
    <div className="flex h-[30px] shrink-0 items-center pl-2.5 text-[#999]">
      <Folder />
      <span className="mx-[7px] h-3 w-px bg-[#888]" />
      <svg viewBox="0 0 14 17" className="ml-0.5 w-3.5 h-[17px]"><path d="M1.500 1.500h8l3 3v11h-11z" fill="#fff" stroke="#666" /><path d="M3 9l3 3 5-6" fill="none" stroke="#d0392b" strokeWidth="2" /></svg>
      <Folder className="ml-2 w-3.5 h-[17px]" />
      <span className="ml-2 w-[7px] border-t border-black pt-0.5"><span className="block w-0 border-x-[3px] border-t-[4px] border-x-transparent border-t-black" /></span>
      <span className="mx-[7px] h-3 w-px bg-[#888]" />
      <span className="whitespace-nowrap">C:\Users\Administrator\Desktop\3dmax阿酷插件v3.2_最终版_for_3dmax2...</span>
      <svg viewBox="0 0 124 24" className="ml-auto w-[124px] h-6 fill-none stroke-[#888]"><path d="M5 11.500h10M50.500 6.500h9v9h-9zM96 6l10 10M106 6L96 16" /></svg>
    </div>
    <div className="flex h-[27px] shrink-0 items-start border-b border-[#dadbdc] text-[#3a3a3a]">
      <button className="h-[23px] w-14 bg-[#0f68b2] text-white">文件</button>
      <div className="flex h-[26px] items-center gap-[29px] pl-3.5"><button>主页</button><button>共享</button><button>查看</button></div>
      <div className="ml-auto flex h-[26px] items-center gap-2.5 pr-1">
        <svg viewBox="0 0 10 6" className="w-2.5 h-1.5"><path d="M1 1l4 4 4-4" fill="none" stroke="#999" strokeWidth="1.3" /></svg>
        <button className="size-3.5 rounded-full bg-[#0f68b2] text-[11px] font-bold leading-[14px] text-white">?</button>
      </div>
    </div>
    <div className="flex h-[43px] shrink-0 items-center px-3 pb-0.5">
      <svg viewBox="0 0 94 20" className="w-[94px] h-5 fill-none" strokeWidth="1.6">
        <path d="M14 10H2M7 5l-5 5 5 5M31 10h12M38 5l5 5-5 5" stroke="#dadada" /><path d="M58 9l3 3 3-3" stroke="#cfcfcf" /><path d="M81 16V5M76 10l5-5 5 5" stroke="#777" strokeWidth="2" />
      </svg>
      <div className="flex h-[31px] flex-1 items-center border border-[#d9d9d9] pl-1">
        <Folder />
        <svg viewBox="0 0 6 8" className="ml-2 w-1.5 h-2"><path d="M1 1l3 3-3 3" fill="none" stroke="#555" strokeWidth="1.5" /></svg>
        <input aria-label="地址" defaultValue="3dmax阿酷插件v3.2_最终版_for_3dmax2009~2020" className="ml-[9px] flex-1 bg-transparent text-black outline-none" />
        <svg viewBox="0 0 10 6" className="mr-[9px] w-2.5 h-1.5"><path d="M1 1l4 4 4-4" fill="none" stroke="#555" strokeWidth="1.8" /></svg>
        <button aria-label="刷新" className="flex h-full w-[31px] items-center justify-center border-l border-[#d9d9d9]">
          <svg viewBox="0 0 14 14" className="size-3.5"><path d="M9.500 3.500a4.500 4.500 0 1 1-5 0M4.500 7V3.500H1.500" fill="none" stroke="#666" strokeWidth="1.6" /></svg>
        </button>
      </div>
      <div className="ml-3 flex h-[31px] w-[98px] items-center border border-[#d9d9d9] pr-2">
        <input aria-label="搜索" className="min-w-0 flex-1 bg-transparent outline-none" />
        <svg viewBox="0 0 12 12" className="size-3"><circle cx="7.5" cy="4.5" r="3.5" fill="none" stroke="#666" strokeWidth="1.4" /><path d="M5 7l-4 4" stroke="#666" strokeWidth="2" /></svg>
      </div>
    </div>
    <div className="flex flex-1">
      <Sidebar />
      <div className="flex gap-[3px] pt-3.5 pl-[5px]">
        {FILES.map(f => (
          <button key={f.lines[0]} className="flex w-[124px] flex-col items-center text-black">
            {f.art}
            <span className="mt-1 flex flex-col leading-[17px]">{f.lines.map(l => <span key={l}>{l}</span>)}</span>
          </button>
        ))}
      </div>
    </div>
    <div className="flex h-6 shrink-0 items-center pl-3.5 pr-1 text-[#28384a]">
      3 个项目
      <button aria-label="详细信息" className="ml-auto mr-[3px]">
        <svg viewBox="0 0 16 14" className="w-4 h-3.5"><path d="M.500.500h4v12h-4zM.500 4.500h4M.500 8.500h4" fill="none" stroke="#999" /><path d="M6 2.500h4M12 2.500h4M6 6.500h4M12 6.500h4M6 10.500h4M12 10.500h4" stroke="#777" /></svg>
      </button>
      <button aria-label="大图标" className="flex h-6 w-[22px] items-center justify-center border border-[#2d9bc4] bg-[#cfe9f2]">
        <svg viewBox="0 0 14 12" className="w-3.5 h-3"><path d="M.500.500h13v11H.500z" fill="#fff" stroke="#8c9499" /><path d="M2 2h10v8H2z" fill="#9fcdea" /><path d="M2 5l4 2 6 1v2H2z" fill="#2f4a5c" /></svg>
      </button>
    </div>
  </div>
);

const TimeSlider = () => (
  <div className="flex h-[26px] shrink-0 items-center gap-[2px] border-b border-[#111] pl-[9px] text-[11px] text-[#dedede]">
    <button aria-label="上一帧" className="flex h-4 w-3.5 items-center justify-center rounded-[2px] bg-[#606060]"><svg viewBox="0 0 6 8" className="w-1.5 h-2"><path d="M5 0L1 4l4 4" fill="none" stroke="#ddd" /></svg></button>
    <button className={`h-4 w-[123px] rounded-[2px] bg-[#646464] leading-4 ${MONO}`}>0 / 100</button>
    <button aria-label="下一帧" className="flex h-4 w-3.5 items-center justify-center rounded-[2px] bg-[#606060]"><svg viewBox="0 0 6 8" className="w-1.5 h-2"><path d="M1 0l4 4-4 4" fill="none" stroke="#ddd" /></svg></button>
  </div>
);

const FRAMES = Array.from({ length: 101 }, (_, i) => i);

const TrackBar = () => (
  <div className="flex h-[26px] shrink-0 pr-[47px]">
    <Grip className="ml-px h-6" />
    <button aria-label="迷你曲线编辑器" className="flex w-[53px] items-center justify-center">
      <svg viewBox="0 0 16 14" className="w-4 h-3.5 fill-none"><path d="M2 1v12" stroke="#ccc" strokeWidth="3" strokeDasharray="1 1" /><path d="M6 7c1-7 4-7 5-1s3 7 4 1" stroke="#3f9db5" strokeWidth="1.4" /></svg>
    </button>
    <div className={`relative flex h-[25px] flex-1 bg-[#292929] text-[11px] text-[#b9b9b9] ${NUM}`}>
      {FRAMES.map(f => (
        <span key={f} className="relative flex min-w-0 flex-1 justify-center">
          {f === 0 && <span className="absolute inset-y-0 w-2 bg-[#857a30]" />}
          <span className={`relative w-px ${f % 5 === 0 ? 'h-full bg-[#666]' : 'h-3 bg-[#5c5c5c]'}`} />
          {f % 5 === 0 && <span className={`absolute bottom-px leading-3 ${f === 0 ? 'text-[#eadf7a]' : ''}`}>{f}</span>}
        </span>
      ))}
    </div>
  </div>
);

const IconButton = ({ name, corner = false }: { name: string; corner?: boolean }) => (
  <button aria-label={name} className="relative flex h-[22px] w-[23px] shrink-0 items-center justify-center">
    <Icon name={name} className="size-5" />
    {corner && <Corner />}
  </button>
);

const Coord = ({ axis, value }: { axis: string; value: string }) => (
  <label className="flex items-center text-[11px] text-white">
    <span className="w-[15px]">{axis}:</span>
    <input defaultValue={value} className="h-[18px] w-[58px] border border-[#3c3c3c] bg-[#575757] pl-[3px] text-[10px] text-[#929292] outline-none" />
  </label>
);

const StatusBar = () => (
  <footer className={`flex h-[55px] shrink-0 pl-[3px] pt-[5px] text-xs text-[#f0f0f0] whitespace-nowrap ${MONO}`}>
    <div className="flex w-[98px] flex-col">
      <input aria-label="宏录制器" className="h-[22px] w-full border-2 border-white border-t-[#888] border-l-[#888] bg-[#dcc1c3] outline-none" />
      <input aria-label="侦听器" defaultValue="MAXScript 迷你侦听器" className="h-[23px] w-full border-2 border-white border-t-[#888] border-l-[#888] bg-white pl-[3px] pr-1 text-[#808080] outline-none" />
    </div>
    <span className="-mt-0.5 mx-1 h-[50px] w-px bg-[#151515]" />
    <div className="flex min-w-0 flex-1 flex-col gap-[3px]">
      <div className="flex h-[25px] items-center">
        <span className="pt-[3px] pl-px">未选定任何对象</span>
        <div className="ml-auto mr-[42px] flex items-center">
          <div className="flex gap-1"><IconButton name="isolate" /><IconButton name="lock" /><IconButton name="absolute" /></div>
          <div className="ml-1 flex gap-[13px]"><Coord axis="X" value="-6.247" /><Coord axis="Y" value="-91.66" /><Coord axis="Z" value="0.0" /></div>
          <span className={`ml-4 w-[66px] ${NUM}`}>栅格 = 10.0</span>
        </div>
      </div>
      <div className="flex h-5 items-center">
        <span className="pt-[3px] pl-px">单击或单击并拖动以选择对象</span>
        <div className="ml-auto mr-[42px] flex items-center">
          <Sep />
          <button aria-label="时间标记" className="flex size-5 items-center justify-center rounded-[2px] bg-[#5b9acb]"><Icon name="tag" className="size-[18px]" /></button>
          <span className="ml-[5px] w-[67px] pt-0.5 text-[11px] text-[#d8d8d8]">添加时间标记</span>
        </div>
      </div>
    </div>
    <div className="flex w-[120px] shrink-0 flex-col gap-0.5">
      <div className="flex h-6 items-center justify-between">
        <IconButton name="first" /><span className="h-4 w-px bg-[#151515]" /><IconButton name="prev" /><IconButton name="start" corner /><IconButton name="next" /><span className="h-4 w-px bg-[#151515]" /><IconButton name="last" />
      </div>
      <div className="flex h-5 items-center">
        <IconButton name="step" />
        <span className="ml-px h-4 w-px bg-[#151515]" />
        <span className="relative flex w-[69px] items-center">
          <input aria-label="当前帧" defaultValue="0" className="ml-0.5 h-[17px] w-full bg-[#646464] pl-[3px] text-[#dcdcdc] outline-none" />
          <svg viewBox="0 0 6 10" className="absolute right-1 w-1.5 h-2.5"><path d="M3 0l3 4H0zM3 10l3-4H0z" fill={G} /></svg>
        </span>
        <span className="ml-1 h-4 w-px bg-[#151515]" />
        <IconButton name="clock" />
      </div>
    </div>
    <button aria-label="设置关键点模式" className="ml-3 mt-0.5 flex h-[42px] w-10 shrink-0 items-center justify-center rounded-[2px] bg-[#646464]">
      <svg viewBox="0 0 30 30" className="size-[30px]"><path d="M13 2v24M1 14h24" stroke={G} strokeWidth="4.5" /><circle cx="17" cy="24" r="3" fill="none" stroke={D} strokeWidth="5" /><path d="M19 22l8-6" stroke={D} strokeWidth="5" /><circle cx="17" cy="24" r="3" fill="none" stroke={T} strokeWidth="2.4" /><path d="M19 22l8-6M23 19l2 3M26 17l2 3" stroke={T} strokeWidth="2" /></svg>
    </button>
    <div className="mt-0.5 ml-[5px] flex w-[65px] shrink-0 flex-col gap-0.5 text-[#e4e4e4]">
      <button className="h-5 rounded-[2px] bg-[#646464] pt-0.5">自动关键点</button>
      <button className="h-5 rounded-[2px] bg-[#646464] pt-0.5">设置关键点</button>
    </div>
    <div className="mt-0.5 ml-[5px] flex w-[111px] shrink-0 flex-col gap-[5px]">
      <Select label="关键点集" options={['选定对象']} className="h-[18px] bg-[#646464]" />
      <div className="flex h-5 gap-[3px]">
        <IconButton name="keycurve" corner />
        <button className={`h-5 min-w-0 flex-1 rounded-[2px] bg-[#646464] leading-5 ${NUM}`}>关键点过滤器...</button>
      </div>
    </div>
    <div className="ml-[13px] grid shrink-0 grid-cols-4 content-start gap-y-px pt-px">
      <IconButton name="zoom" /><IconButton name="zoomall" /><IconButton name="extents" corner /><IconButton name="extall" corner />
      <IconButton name="fov" corner /><IconButton name="pan" corner /><IconButton name="orbit" corner /><IconButton name="maximize" />
    </div>
    <svg viewBox="0 0 10 10" className="ml-3.5 mt-auto size-2.5 shrink-0"><path d="M8 1h1M5 4h4M2 7h7" stroke="#bbb" strokeWidth="2" strokeDasharray="1.500 1.500" /></svg>
  </footer>
);

const App: React.FC = () => (
  <div className="relative flex h-screen flex-col overflow-hidden bg-[#434544]">
    <TitleBar />
    <MenuBar />
    <MainToolbar />
    <PluginToolbar />
    <Ribbon />
    <div className="flex min-h-0 flex-1">
      <LeftStrip />
      <Viewport />
      <CommandPanel />
    </div>
    <TimeSlider />
    <TrackBar />
    <StatusBar />
    <Explorer />
    {/* Mouse pointer */}
    <svg viewBox="0 0 12 19" className="absolute left-[1330px] top-[877px] h-[19px] w-3"><path d="M.500 1v15l3.500-3 2.500 5 2-1-2.500-5H11z" fill="#fff" stroke="#222" /></svg>
  </div>
);

export default App;
